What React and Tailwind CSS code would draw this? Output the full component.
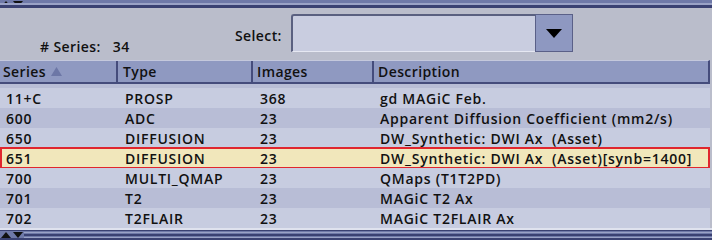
import React from "react";

const rows = [
  { series: "11+C", type: "PROSP", images: "368", desc: "gd MAGiC Feb." },
  { series: "600", type: "ADC", images: "23", desc: "Apparent Diffusion Coefficient (mm2/s)" },
  { series: "650", type: "DIFFUSION", images: "23", desc: "DW_Synthetic: DWI Ax  (Asset)" },
  { series: "651", type: "DIFFUSION", images: "23", desc: "DW_Synthetic: DWI Ax  (Asset)[synb=1400]", selected: true },
  { series: "700", type: "MULTI_QMAP", images: "23", desc: "QMaps (T1T2PD)" },
  { series: "701", type: "T2", images: "23", desc: "MAGiC T2 Ax" },
  { series: "702", type: "T2FLAIR", images: "23", desc: "MAGiC T2FLAIR Ax" },
];

const Arrows = () => (
  <svg width="24" height="7" viewBox="0 0 24 7" className="shrink-0">
    <path d="M1 7 L6 1 L11 7 Z" fill="#111" />
    <path d="M13 1 L23 1 L18 7 Z" fill="#111" />
  </svg>
);

export default function App() {
  return (
    <div
      className="w-[712px] h-[240px] bg-[#babdcb] flex flex-col overflow-hidden text-[#111] tracking-[0.75px]"
      style={{ fontFamily: "'Open Sans', 'DejaVu Sans', sans-serif" }}
    >
      {/* top splitter */}
      <div className="h-[8px] flex flex-col">
        <div className="h-[3px] bg-[#6f79a8] flex items-end">
          <div className="-mb-[4px]"><Arrows /></div>
        </div>
        <div className="h-[2px] bg-[#9aa2c6]" />
        <div className="h-[3px] bg-[#3a4172]" />
      </div>

      {/* select area */}
      <div className="h-[52px] flex relative text-[14px] font-semibold">
        <div className="absolute left-[40px] top-[28px] tracking-[0.4px]">#&nbsp;Series:&nbsp;&nbsp;&nbsp;34</div>
        <div className="absolute left-[235px] top-[17px] tracking-[0.4px]">Select:</div>
        <div className="absolute left-[291px] top-[6px] w-[282px] h-[38px] flex">
          <div className="flex-1 bg-[#c9cde0] border-t-[2px] border-l-[2px] border-[#5a6080] rounded-tl-[3px] border-b border-b-[#e6e8f2]" />
          <div className="w-[38px] bg-[#8e98c1] border border-[#5a6088] flex items-center justify-center">
            <svg width="16" height="9" viewBox="0 0 16 9"><path d="M0 0 L16 0 L8 9 Z" fill="#000" /></svg>
          </div>
        </div>
      </div>

      {/* header */}
      <div className="h-[24px] flex w-[710px] bg-[#8f99c1] border-t border-t-[#c4c8dc] border-b-[2px] border-b-[#454c7c] border-r-[2px] border-r-[#454c7c] text-[14px] font-semibold tracking-[0.4px]">
        <div className="w-[118px] flex items-center pl-[3px] gap-[5px] border-r-[2px] border-r-[#454c7c]">
          Series
          <svg width="11" height="9" viewBox="0 0 11 9"><path d="M0 9 L5.5 0 L11 9 Z" fill="#6d77a6" /></svg>
        </div>
        <div className="w-[135px] flex items-center pl-[5px] border-r-[2px] border-r-[#454c7c]">Type</div>
        <div className="w-[121px] flex items-center pl-[4px] border-r-[2px] border-r-[#454c7c]">Images</div>
        <div className="flex-1 flex items-center pl-[4px]">Description</div>
      </div>

      {/* rows */}
      <div className="flex-1 flex flex-col overflow-hidden w-[710px] text-[14px] font-semibold">
        <div className="h-[4px] bg-[#b8bdd6] shrink-0" />
        {rows.map((r, i) => (
          <div
            key={r.series}
            className={`h-[20px] shrink-0 flex items-center relative ${
              r.selected ? "bg-[#f1e7bb]" : i % 2 === 0 ? "bg-[#c7cce0]" : "bg-[#b8bdd6]"
            }`}
          >
            {r.selected && (
              <div className="absolute left-0 right-0 -top-[1px] -bottom-[1px] border-[2px] border-[#e0262e]" />
            )}
            <div className="w-[118px] pl-[6px]">{r.series}</div>
            <div className="w-[135px] pl-[7px]">{r.type}</div>
            <div className="w-[121px] pl-[7px]">{r.images}</div>
            <div className="flex-1 pl-[6px] whitespace-pre">{r.desc}</div>
          </div>
        ))}
      </div>

      {/* bottom splitter */}
      <div className="h-[12px] flex flex-col shrink-0">
        <div className="h-[2px] bg-[#dfe2ee]" />
        <div className="h-[2px] bg-[#3a4172]" />
        <div className="flex-1 flex items-center bg-[#6f79a8]">
          <Arrows />
          <div className="flex-1 flex flex-col gap-[1px]">
            <div className="h-[1px] bg-[#9aa2c6]" />
            <div className="h-[2px] bg-[#3a4172]" />
            <div className="h-[1px] bg-[#9aa2c6]" />
          </div>
        </div>
        <div className="h-[2px] bg-[#3a4172]" />
      </div>
    </div>
  );
}
